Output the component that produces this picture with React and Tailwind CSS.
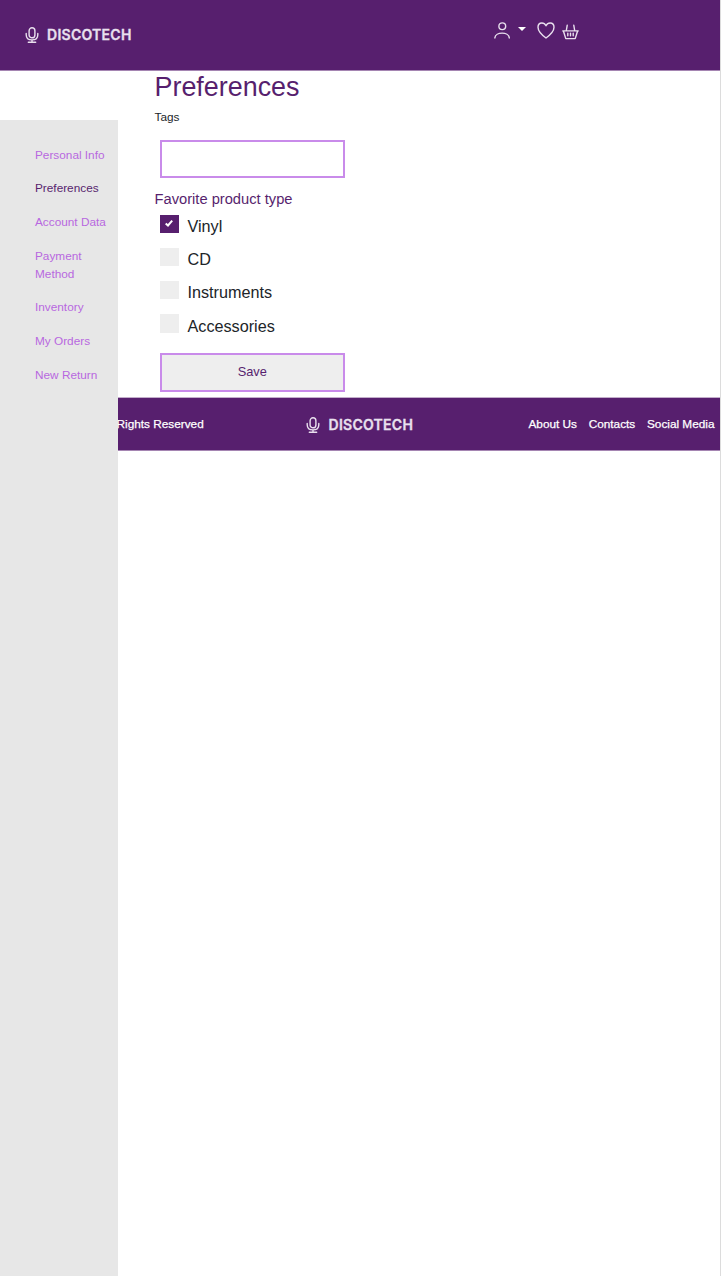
const links = [
  { label: "Personal Info" },
  { label: "Preferences", active: true },
  { label: "Account Data" },
  { label: "Payment Method" },
  { label: "Inventory" },
  { label: "My Orders" },
  { label: "New Return" },
];

const types = [
  { label: "Vinyl", checked: true },
  { label: "CD" },
  { label: "Instruments" },
  { label: "Accessories" },
];

function Logo() {
  return (
    <div className="flex items-center text-[#e9e0ee]">
      <svg viewBox="0 0 16 16" className="h-4 w-4" fill="none" stroke="currentColor" strokeWidth="1.4" strokeLinecap="round">
        <rect x="5.1" y="0.8" width="5.8" height="10" rx="2.9" />
        <path d="M2.200 6.500v1.200c0 3.400 2.400 5.200 5.800 5.200s5.800-1.800 5.800-5.200V6.500M8 13v2M4.300 15.200h7.400" />
      </svg>
      <span className="ml-[7.5px] font-['Inter',sans-serif] text-[14px] font-semibold leading-4 tracking-[0.27px] [-webkit-text-stroke:0.3px_#e9e0ee]">
        DISCOTECH
      </span>
    </div>
  );
}

function Header() {
  return (
    <header className="box-content flex h-[70px] shrink-0 border-b border-[#a585b2] bg-[#571f6e] text-[#e9e0ee]">
      <div className="w-[494px] pl-[23.5px] pt-[27px]">
        <Logo />
      </div>
      <div className="flex pt-[22px]">
        <svg viewBox="0 0 16 16" className="h-[17px] w-[17px]" fill="none" stroke="currentColor" strokeWidth="1.3" strokeLinecap="round">
          <circle cx="7.8" cy="4" r="3.2" />
          <path d="M.8 15c.6-6 13-6 13.6 0" />
        </svg>
        <svg viewBox="0 0 8 4" className="ml-[6.5px] mt-[5px] h-[4px] w-[8px]" fill="#fff">
          <path d="M0 0h8L4 4z" />
        </svg>
        <svg viewBox="0 0 18 17" className="ml-[11.5px] h-[17px] w-[18px]" fill="none" stroke="currentColor" strokeWidth="1.4" strokeLinejoin="round">
          <path d="M9 16C6.600 14.200 1 9.500 1 5.200C1 2.500 2.800 1 4.900 1C6.800 1 8.200 2.200 9 3.800C9.800 2.200 11.200 1 13.100 1C15.200 1 17 2.500 17 5.200C17 9.500 11.400 14.200 9 16Z" />
        </svg>
        <svg viewBox="0 0 17 16" className="ml-[7px] mt-[2px] h-[16px] w-[17px]" fill="none" stroke="currentColor" strokeWidth="1.4" strokeLinejoin="round" strokeLinecap="round">
          <path d="M5.200 1.300 4.400 6M11.800 1.300 12.600 6M.8 6.900h15.400M1.400 7 3.800 14.600h9.400L15.600 7" />
          <path d="M5.800 9.300v2.400M8.500 9.300v2.400M11.200 9.300v2.400" />
        </svg>
      </div>
    </header>
  );
}

function Sidebar() {
  return (
    <nav className="mt-[49px] flex w-[117.5px] shrink-0 flex-col gap-[15.7px] bg-[#e7e7e7] pl-[35px] pt-[25.6px] text-[11.8px] leading-[18px]">
      {links.map((l) => (
        <a key={l.label} className={l.active ? "w-[76px] text-[#571f6e]" : "w-[76px] text-[#b867e0]"}>
          {l.label}
        </a>
      ))}
    </nav>
  );
}

function Preferences() {
  return (
    <main className="flex h-[326px] shrink-0 flex-col pl-[37px] text-[#212529]">
      <h1 className="h-8 text-[26.9px] leading-8 text-[#571f6e]">Preferences</h1>
      <label className="mt-[5px] h-[18px] text-[11.8px] leading-[18px]">Tags</label>
      <input className="ml-[5.5px] mt-[13.5px] h-[38.5px] w-[184.5px] border-2 border-[#c98bea] bg-white" />
      <h2 className="mt-[11px] h-[20px] text-[14.7px] leading-[20px] text-[#571f6e]">Favorite product type</h2>
      <div className="mt-[5.5px] flex flex-col gap-[14.7px] pl-[5.5px]">
        {types.map((t) => (
          <div key={t.label} className="flex h-[18.5px]">
            <span className={t.checked ? "flex w-[18.5px] justify-center bg-[#571f6e]" : "w-[18.5px] bg-[#eeeeee]"}>
              {t.checked && (
                <svg viewBox="0 0 8 7" className="mr-px mt-[5px] h-[7px] w-[8px]" fill="none" stroke="#fff" strokeWidth="2">
                  <path d="M.7 3.4 3 5.5 7.2.7" />
                </svg>
              )}
            </span>
            <span className="ml-[9px] mt-[1.5px] text-[16.2px] leading-[20px]">{t.label}</span>
          </div>
        ))}
      </div>
      <button className="ml-[5.5px] mt-[20.5px] h-[38.5px] w-[184.5px] shrink-0 border-2 border-[#c98bea] bg-[#eeeeee] pb-[2px] text-[12.8px] text-[#571f6e]">
        Save
      </button>
    </main>
  );
}

function Footer() {
  return (
    <footer className="flex h-[54px] shrink-0 items-center overflow-hidden border-y border-t-[#c3aecb] border-b-[#a585b2] bg-[#571f6e] text-[11.8px] text-white [-webkit-text-stroke:0.25px_white]">
      <span className="w-[187.5px] whitespace-nowrap pt-px -indent-px">Rights Reserved</span>
      <div className="mt-px [-webkit-text-stroke:0px]">
        <Logo />
      </div>
      <div className="ml-auto mr-[5.5px] flex gap-[11.7px] whitespace-nowrap pt-px">
        <a>About Us</a>
        <a>Contacts</a>
        <a>Social Media</a>
      </div>
    </footer>
  );
}

export default function App() {
  return (
    <div className="flex h-[1276px] w-[722px] overflow-hidden bg-white font-['Liberation_Sans',Arial,sans-serif]">
      <div className="flex w-[720px] flex-col">
        <Header />
        <div className="flex grow">
          <Sidebar />
          <div className="flex grow flex-col">
            <Preferences />
            <Footer />
          </div>
        </div>
      </div>
      <div className="w-px bg-[#dcdcdc]" />
    </div>
  );
}
